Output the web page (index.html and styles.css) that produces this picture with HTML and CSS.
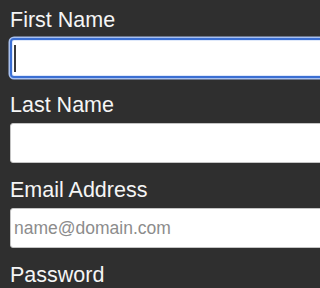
FILE: index.html
```html
<!DOCTYPE html>
<html lang="en">
<head>
<meta charset="utf-8">
<title>Sign up</title>
<link rel="stylesheet" href="styles.css">
</head>
<body>
<form class="form">
  <div class="field">
    <label class="label" for="first">First Name</label>
    <div class="input-wrap">
      <input class="input is-focused" id="first" type="text">
      <span class="caret"></span>
    </div>
  </div>
  <div class="field">
    <label class="label" for="last">Last Name</label>
    <input class="input" id="last" type="text">
  </div>
  <div class="field">
    <label class="label" for="email">Email Address</label>
    <input class="input" id="email" type="email" placeholder="name@domain.com">
  </div>
  <div class="field">
    <label class="label" for="pw">Password</label>
    <input class="input" id="pw" type="password">
  </div>
</form>
</body>
</html>
```
FILE: styles.css
```css
html, body {
  margin: 0;
  padding: 0;
  background: #2f2f2f;
  overflow: hidden;
  width: 100%;
  height: 100%;
}
body {
  font-family: "Liberation Sans", Arial, sans-serif;
}
.form {
  box-sizing: border-box;
  width: 100%;
  height: 100%;
  overflow: hidden;
  padding: 8px 0 0 10px;
  display: flex;
  flex-direction: column;
  gap: 15px;
}
.field {
  display: flex;
  flex-direction: column;
  gap: 6px;
  flex-shrink: 0;
}
.label {
  display: block;
  font-size: 21.5px;
  line-height: 24px;
  color: #f5f5f5;
}
.input-wrap {
  position: relative;
}
.input {
  display: block;
  box-sizing: border-box;
  width: calc(100% + 30px);
  height: 40px;
  margin: 0;
  padding: 0 3px;
  border: 1px solid #c4c4c4;
  border-radius: 3px;
  background: #ffffff;
  font-family: "Liberation Sans", Arial, sans-serif;
  font-size: 17.5px;
  color: #222;
  outline: none;
}
.input::placeholder {
  color: #8c8c8c;
  opacity: 1;
}
.input.is-focused {
  border: 2px solid #3b6fd3;
  border-radius: 4px;
  box-shadow: 0 0 0 1.5px #a8c0ee, inset 0 0 0 1px #dfe9fb;
}
.caret {
  position: absolute;
  left: 4px;
  top: 7px;
  width: 2px;
  height: 27px;
  background: #3a3a3a;
}
```
